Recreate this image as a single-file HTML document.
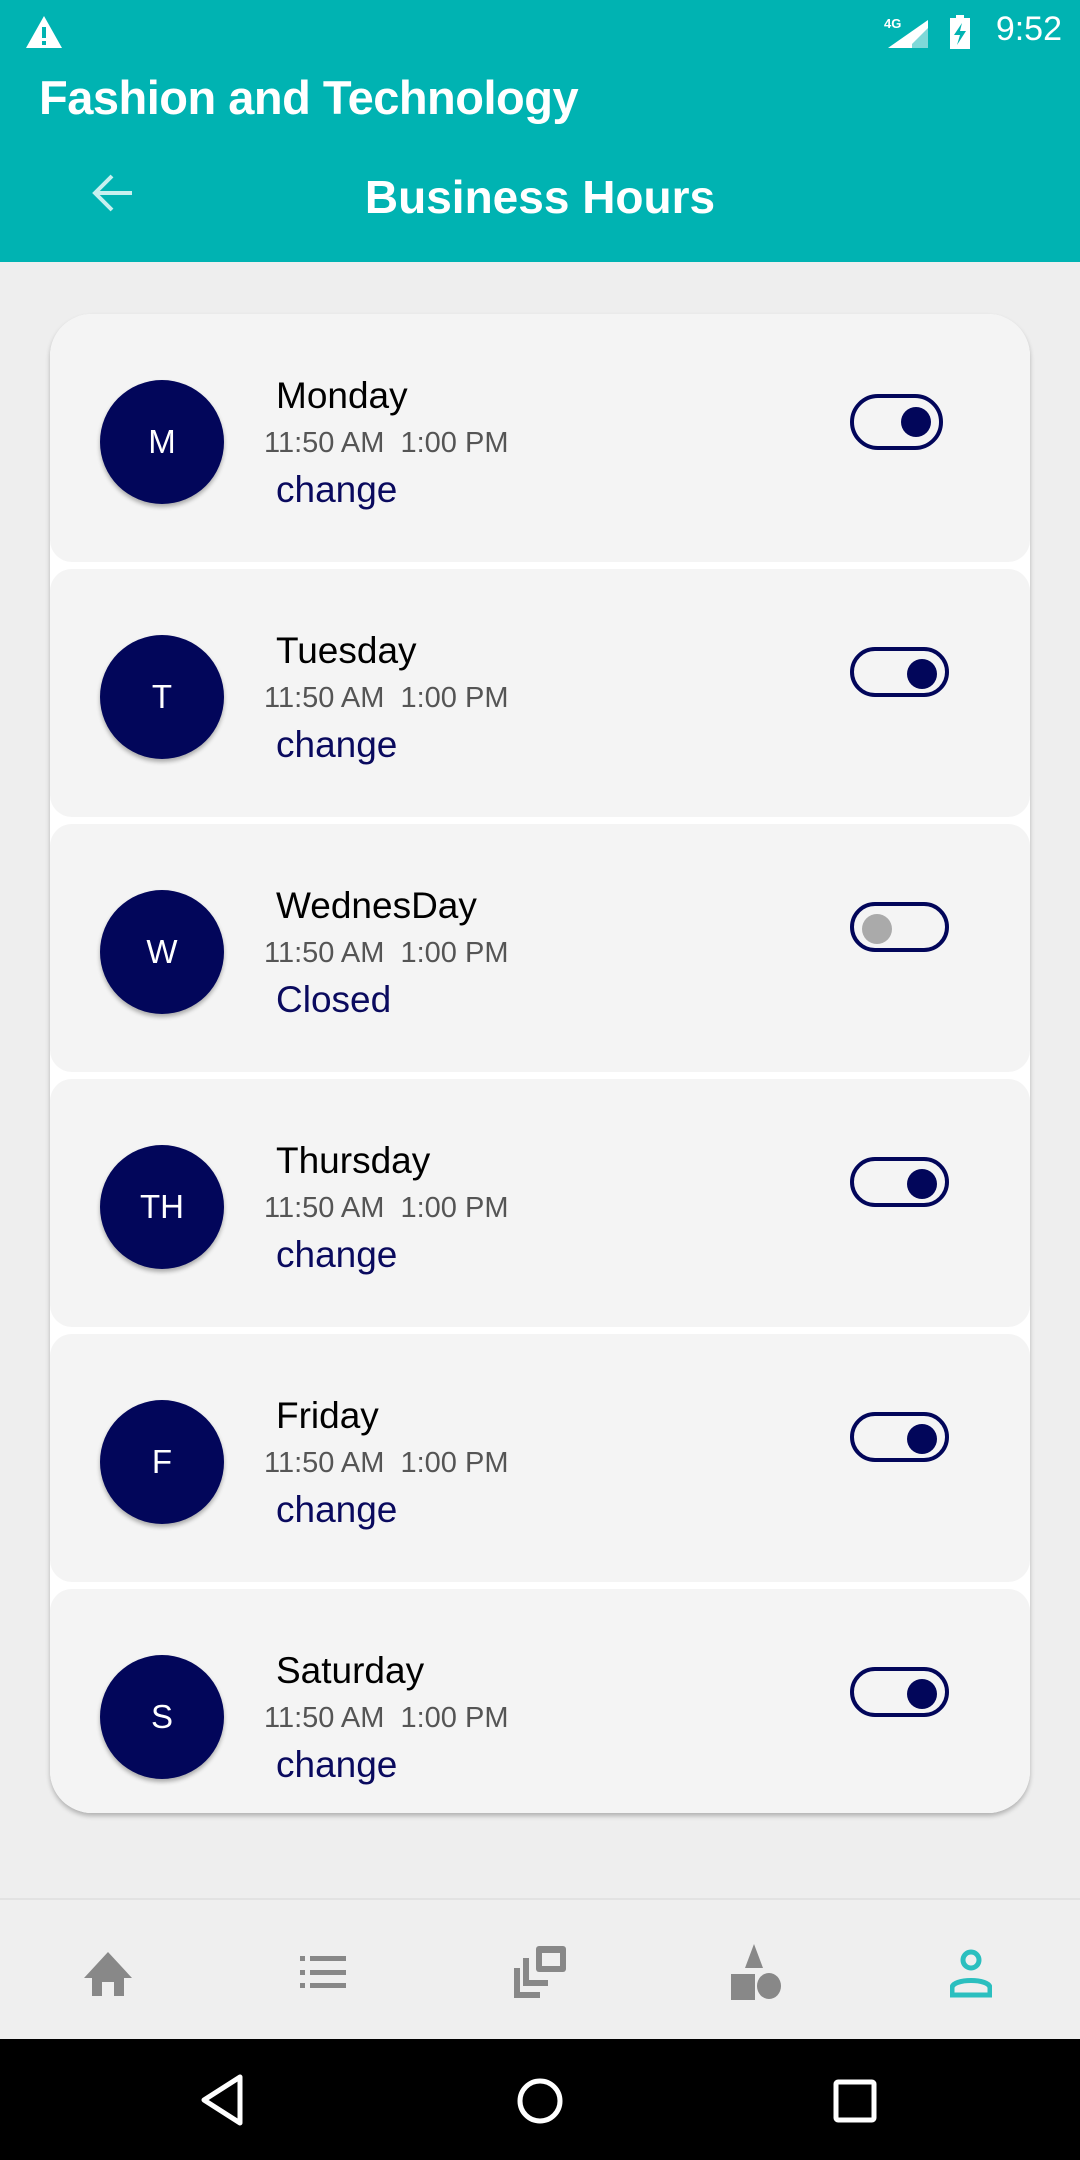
<!DOCTYPE html>
<html><head><meta charset="utf-8"><style>
*{margin:0;padding:0;box-sizing:border-box}
body{width:1080px;height:2160px;background:#eeeeee;font-family:"Liberation Sans",Roboto,sans-serif;position:relative;overflow:hidden}
.hdr{position:absolute;left:0;top:0;width:1080px;height:262px;background:#00b3b2}
.t1{position:absolute;left:39px;top:70px;color:#fff;font-weight:bold;font-size:47px;letter-spacing:-0.5px}
.t2{position:absolute;left:0;width:1080px;text-align:center;top:170px;color:#fff;font-weight:bold;font-size:46px}
.time{position:absolute;right:18px;top:10px;color:#fff;font-size:34px}
.card{position:absolute;left:50px;top:314px;width:980px;height:1499px;background:#fff;border-radius:42px;box-shadow:0 3px 5px rgba(0,0,0,.25);overflow:hidden}
.row{position:absolute;left:0;width:980px;height:248px;background:#f4f4f4;border-radius:22px}
.circ{position:absolute;left:50px;top:66px;width:124px;height:124px;border-radius:50%;background:#02065a;color:#fff;font-size:33px;display:flex;align-items:center;justify-content:center;box-shadow:0 3px 4px rgba(0,0,0,.3)}
.day{position:absolute;left:226px;top:61px;font-size:37px;color:#000}
.tm{position:absolute;left:214px;top:113px;font-size:29px;color:#555}
.ch{position:absolute;left:226px;top:155px;font-size:37px;color:#0a0a5e}
.tg{position:absolute;left:800px;top:78px;width:99px;height:50px;border:4px solid #02065a;border-radius:25px}
.kn{position:absolute;right:8px;top:8px;width:30px;height:30px;border-radius:50%;background:#02065a}
.off .kn{left:8px;right:auto;background:#aaa}
.nav{position:absolute;left:0;top:1898px;width:1080px;height:141px;background:#efefef;border-top:2px solid #e2e2e2}
.sys{position:absolute;left:0;top:2039px;width:1080px;height:121px;background:#000}
</style></head><body>
<div class="hdr">
<svg style="position:absolute;left:24px;top:14px" width="40" height="36" viewBox="0 0 40 36"><path d="M20 2 L38 34 H2 Z" fill="#fff"/><rect x="18" y="13" width="4" height="11" fill="#00b3b2"/><rect x="18" y="27" width="4" height="4" fill="#00b3b2"/></svg>
<svg style="position:absolute;left:882px;top:14px" width="120" height="36" viewBox="0 0 120 36"><text x="2" y="14" font-size="13" fill="#fff" font-family="Liberation Sans" font-weight="bold">4G</text><path d="M6 34 L46 34 L46 6 Z" fill="#fff"/><path d="M30 34 L46 34 L46 14 L30 30Z" fill="#7fd8d8"/><rect x="68" y="4" width="20" height="31" fill="#fff"/><rect x="74" y="1" width="8" height="4" fill="#fff"/><path d="M80 9 L72 21 H78 L75 31 L84 17 H78Z" fill="#00b3b2"/></svg>
<div class="time">9:52</div>
<div class="t1">Fashion and Technology</div>
<svg style="position:absolute;left:90px;top:172px" width="46" height="42" viewBox="0 0 46 42"><path d="M42 21 H5 M22 4 L5 21 L22 38" stroke="#c8f0ef" stroke-width="4" fill="none"/></svg>
<div class="t2">Business Hours</div>
</div>
<div class="card">
<div class="row" style="top:0"><div class="circ">M</div><div class="day">Monday</div><div class="tm">11:50 AM&nbsp; 1:00 PM</div><div class="ch">change</div><div class="tg" style="width:93px;top:80px;height:56px;border-radius:28px"><div class="kn" style="top:9px"></div></div></div>
<div class="row" style="top:255px"><div class="circ">T</div><div class="day">Tuesday</div><div class="tm">11:50 AM&nbsp; 1:00 PM</div><div class="ch">change</div><div class="tg"><div class="kn"></div></div></div>
<div class="row off" style="top:510px"><div class="circ">W</div><div class="day">WednesDay</div><div class="tm">11:50 AM&nbsp; 1:00 PM</div><div class="ch">Closed</div><div class="tg"><div class="kn"></div></div></div>
<div class="row" style="top:765px"><div class="circ">TH</div><div class="day">Thursday</div><div class="tm">11:50 AM&nbsp; 1:00 PM</div><div class="ch">change</div><div class="tg"><div class="kn"></div></div></div>
<div class="row" style="top:1020px"><div class="circ">F</div><div class="day">Friday</div><div class="tm">11:50 AM&nbsp; 1:00 PM</div><div class="ch">change</div><div class="tg"><div class="kn"></div></div></div>
<div class="row" style="top:1275px;height:230px"><div class="circ">S</div><div class="day">Saturday</div><div class="tm">11:50 AM&nbsp; 1:00 PM</div><div class="ch">change</div><div class="tg"><div class="kn"></div></div></div>
</div>
<div class="nav">
<svg style="position:absolute;left:83px;top:50px" width="50" height="46" viewBox="0 0 50 46"><path d="M25 2 L49 28 H41 V46 H31 V32 H19 V46 H9 V28 H1 Z" fill="#888"/></svg>
<svg style="position:absolute;left:300px;top:54px" width="48" height="36" viewBox="0 0 48 36"><g fill="#888"><rect x="0" y="2" width="5" height="5"/><rect x="10" y="2" width="36" height="5"/><rect x="0" y="16" width="5" height="5"/><rect x="10" y="16" width="36" height="5"/><rect x="0" y="29" width="5" height="5"/><rect x="10" y="29" width="36" height="5"/></g></svg>
<svg style="position:absolute;left:514px;top:46px" width="52" height="52" viewBox="0 0 52 52"><g fill="#888"><rect x="22" y="0" width="30" height="26" rx="3"/><rect x="9" y="12" width="6" height="28"/><rect x="9" y="34" width="25" height="6"/><rect x="0" y="22" width="6" height="30"/><rect x="0" y="46" width="26" height="6"/></g><rect x="28" y="7" width="18" height="13" fill="#efefef"/></svg>
<svg style="position:absolute;left:731px;top:44px" width="50" height="56" viewBox="0 0 50 56"><g fill="#888"><path d="M23 0 L32 24 H14Z"/><rect x="0" y="30" width="24" height="26"/><ellipse cx="38" cy="42" rx="12" ry="13"/></g></svg>
<svg style="position:absolute;left:950px;top:48px" width="42" height="50" viewBox="0 0 42 50"><g fill="none" stroke="#2bbfbf" stroke-width="5"><circle cx="21" cy="12" r="8"/><path d="M2 47 V40 C2 30 40 30 40 40 V47 Z"/></g></svg>
</div>
<div class="sys">
<svg style="position:absolute;left:200px;top:35px" width="46" height="52" viewBox="0 0 46 52"><path d="M40 3 V49 L4 26 Z" fill="none" stroke="#fff" stroke-width="5" stroke-linejoin="round"/></svg>
<svg style="position:absolute;left:515px;top:37px" width="50" height="50" viewBox="0 0 50 50"><circle cx="25" cy="25" r="20" fill="none" stroke="#fff" stroke-width="5"/></svg>
<svg style="position:absolute;left:833px;top:40px" width="44" height="44" viewBox="0 0 44 44"><rect x="3" y="3" width="38" height="38" rx="2" fill="none" stroke="#fff" stroke-width="5"/></svg>
</div>
</body></html>
